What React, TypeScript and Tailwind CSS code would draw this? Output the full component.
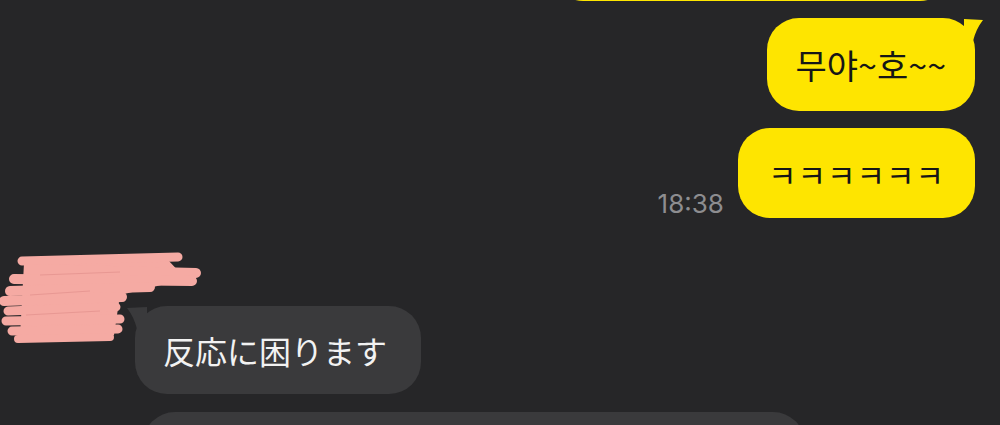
const YELLOW = "bg-[#fee500]";

const OutTail = () => (
  <svg
    className="absolute right-[-9px] top-[1px]"
    width="20"
    height="40"
    viewBox="0 0 20 40"
  >
    <path d="M0 0 L19 1 Q 12 10 9 22 L9 40 L0 40 Z" fill="#fee500" />
  </svg>
);

const InTail = () => (
  <svg
    className="absolute left-[-8px] top-[1px]"
    width="20"
    height="40"
    viewBox="0 0 20 40"
  >
    <path d="M20 0 L0 1 Q 7 10 10 22 L10 40 L20 40 Z" fill="#3a3a3c" />
  </svg>
);

// pink marker scribble hiding avatar + name
const Scribble = () => {
  const strokes: [number, number, number, number, number][] = [
    [22, 10, 178, 6, 9],
    [30, 18, 196, 22, 10],
    [14, 28, 192, 30, 10],
    [10, 40, 150, 36, 10],
    [4, 50, 122, 46, 10],
    [8, 60, 116, 56, 9],
    [6, 70, 120, 68, 9],
    [12, 80, 118, 78, 9],
    [18, 88, 110, 86, 8],
  ];
  return (
    <svg
      className="absolute left-0 top-[7px]"
      width="210"
      height="100"
      viewBox="0 0 210 100"
    >
      <path d="M24 12 L168 9 L186 28 L120 44 L114 84 L20 86 Z" fill="#f5aaa3" />
      {strokes.map(([x1, y1, x2, y2, w], i) => (
        <line
          key={i}
          x1={x1}
          y1={y1}
          x2={x2}
          y2={y2}
          stroke="#f5aaa3"
          strokeWidth={w}
          strokeLinecap="round"
        />
      ))}
      <path d="M40 24 L120 21 M30 44 L90 40 M26 64 L100 60" stroke="#e89893" strokeWidth="1" />
    </svg>
  );
};

export default function App() {
  return (
    <div className="w-[1000px] h-[425px] overflow-hidden bg-[#262628] font-['Noto_Sans_CJK_KR',sans-serif]">
      {/* outgoing */}
      <div className="flex flex-col items-end pr-[25px] gap-[17px] mt-[-62px]">
        <div className={`h-[63px] w-[397px] mr-[25px] rounded-[30px] ${YELLOW}`} />
        <div className={`relative h-[93px] px-[29px] flex items-center rounded-[32px] ${YELLOW}`}>
          <OutTail />
          <span className="relative text-[34px] text-[#161616] leading-none">무야~호~~</span>
        </div>
        <div className="flex items-end gap-[14px]">
          <span className="text-[26px] text-[#8d8d90] leading-none mb-[1px] font-['Inter',sans-serif]">
            18:38
          </span>
          <div className={`h-[90px] px-[30px] flex items-center rounded-[32px] ${YELLOW}`}>
            <span className="text-[31px] text-[#161616] leading-none tracking-[1px]">ㅋㅋㅋㅋㅋㅋ</span>
          </div>
        </div>
      </div>

      {/* incoming */}
      <div className="relative mt-[26px] pt-[62px] pl-[135px] flex flex-col items-start gap-[18px]">
        <Scribble />
        <div className="relative h-[88px] pl-[28px] pr-[34px] flex items-center rounded-[32px] bg-[#3a3a3c]">
          <InTail />
          <span className="relative text-[32px] text-[#f2f2f2] leading-none font-['Noto_Sans_CJK_JP',sans-serif]">
            反応に困ります
          </span>
        </div>
        <div className="ml-[8px] h-[80px] w-[662px] rounded-[32px] bg-[#3a3a3c]" />
      </div>
    </div>
  );
}
